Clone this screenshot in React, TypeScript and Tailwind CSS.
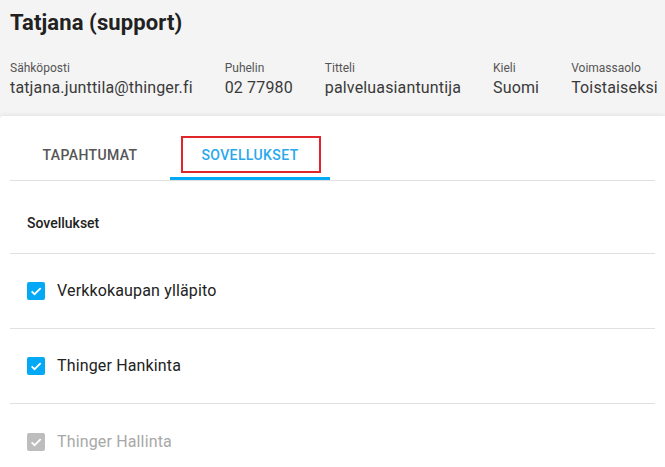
import React from 'react'

type Field = { label: string; value: string }

const fields: Field[] = [
  { label: 'Sähköposti', value: 'tatjana.junttila@thinger.fi' },
  { label: 'Puhelin', value: '02 77980' },
  { label: 'Titteli', value: 'palveluasiantuntija' },
  { label: 'Kieli', value: 'Suomi' },
  { label: 'Voimassaolo', value: 'Toistaiseksi' },
]

const apps = [
  { name: 'Verkkokaupan ylläpito', disabled: false },
  { name: 'Thinger Hankinta', disabled: false },
  { name: 'Thinger Hallinta', disabled: true },
]

function Check({ disabled }: { disabled: boolean }) {
  return (
    <span
      className={
        'flex h-[18px] w-[18px] items-center justify-center rounded-[2px] ' +
        (disabled ? 'bg-[#bdbdbd]' : 'bg-[#03a9f4]')
      }
    >
      <svg width="14" height="14" viewBox="0 0 24 24" fill="none">
        <path d="M4.5 12.5l5 5L20 7" stroke="white" strokeWidth="3" />
      </svg>
    </span>
  )
}

export default function App() {
  return (
    <div className="h-[467px] w-[665px] overflow-hidden bg-[#f4f4f4] font-['Roboto',sans-serif]">
      {/* header */}
      <div className="px-[10px] pt-[8px] h-[116px]">
        <h1 className="text-[22px] leading-[30px] font-bold tracking-[0.1px] text-[#212121]">Tatjana (support)</h1>
        <div className="mt-[22px] flex gap-[32px]">
          {fields.map((f) => (
            <div key={f.label} className="flex flex-col shrink-0 whitespace-nowrap">
              <span className="text-[12px] leading-[16px] text-[#555]">{f.label}</span>
              <span className="text-[16px] leading-[24px] tracking-[0.15px] text-[#3a3a3a]">{f.value}</span>
            </div>
          ))}
        </div>
      </div>

      {/* content */}
      <div className="bg-white rounded-tl-[3px] h-[351px] px-[10px] pt-[15px] shadow-[0_-1px_4px_rgba(0,0,0,0.08)]">
        <div className="flex border-b border-[#e0e0e0]">
          <div className="w-[160px] h-[49px] flex items-center justify-center text-[14px] font-medium tracking-[0.4px] text-[#555]">
            TAPAHTUMAT
          </div>
          <div className="relative w-[160px] h-[49px] flex items-center justify-center text-[14px] font-medium tracking-[0.4px] text-[#29a9ec]">
            SOVELLUKSET
            <div className="absolute left-[11px] right-[9px] top-[5px] h-[37px] border-2 border-[#e0262b]" />
            <div className="absolute left-0 right-0 bottom-0 h-[3px] bg-[#03a9f4]" />
          </div>
        </div>

        <div className="h-[73px] pt-[32px] pl-[17px] border-b border-[#e0e0e0] text-[14px] leading-[20px] font-medium text-[#222]">
          Sovellukset
        </div>

        {apps.map((a, i) => (
          <div
            key={a.name}
            className={
              'h-[75px] flex items-center gap-[12px] pl-[17px] ' +
              (i < apps.length - 1 ? 'border-b border-[#e0e0e0]' : '')
            }
          >
            <Check disabled={a.disabled} />
            <span className={'text-[16px] tracking-[0.15px] ' + (a.disabled ? 'text-[#a8a8a8]' : 'text-[#222]')}>{a.name}</span>
          </div>
        ))}
      </div>
    </div>
  )
}
